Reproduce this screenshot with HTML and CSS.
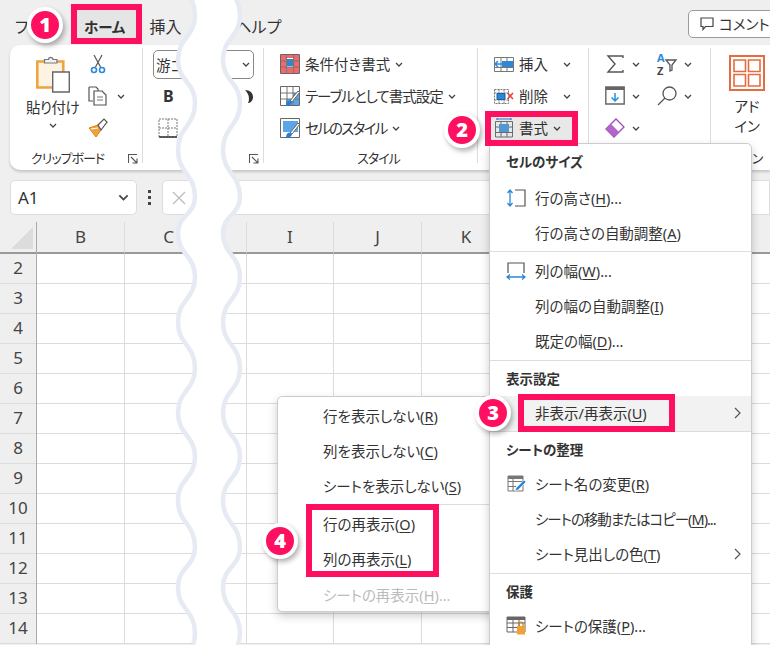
FILE: index.html
```html
<!DOCTYPE html>
<html lang="ja">
<head>
  <meta charset="UTF-8" />
  <title>書式 - 行と列の再表示</title>
  <link rel="stylesheet" href="styles.css">
</head>
<body>
  <svg class="defs" width="0" height="0">
    <symbol id="chev" viewBox="0 0 8 5"><path d="M1 1l3 3 3-3" fill="none" stroke="#444" stroke-width="1.3"/></symbol>
    <symbol id="launch" viewBox="0 0 10 10"><path d="M.5 9V.5H9M3 3l5.500 5.500M9 4.500V9H4.500" fill="none" stroke="#555" stroke-width="1.100"/></symbol>
    <symbol id="brush" viewBox="0 0 20 20"><path d="M10 15L18 5l1.500 1.500L12 16z" fill="#fff" stroke="#666" stroke-width="1"/><path d="M6 20c0-3 1-5 3-5.500l3 1.500c-.5 3-3 4-6 4z" fill="#2b7cd3"/></symbol>
  </svg>

  <!-- Tabs -->
  <nav class="tabs">
    <span class="tab tab-file">ファイル</span>
    <span class="tab tab-home">ホーム</span>
    <span class="tab tab-insert">挿入</span>
    <span class="tab tab-help">ヘルプ</span>
    <span class="comment-btn">
      <svg class="icon-14" viewBox="0 0 14 14"><path d="M1 1h12v8.500H5.500L3 12.500v-3H1z" fill="#fff" stroke="#444" stroke-width="1.200"/></svg>
      コメント
    </span>
  </nav>

  <!-- Ribbon -->
  <div class="ribbon">
    <section class="group group-clip">
      <div class="group-body">
        <div class="paste">
          <svg class="icon-paste" viewBox="0 0 34 38">
            <path d="M1.300 6.500h26v26H1.300z" fill="#fdf3e3" stroke="#eea33c" stroke-width="2.500"/>
            <path d="M8.500 8V4.500h4a2.200 2.200 0 0 1 4.400 0h4V8z" fill="#f2f2f2" stroke="#777" stroke-width="1.200"/>
            <path d="M16.700 17h16.600v20H16.700z" fill="#fff" stroke="#666" stroke-width="1.400"/>
          </svg>
          <span class="paste-label">貼り付け</span>
          <svg class="chev"><use href="#chev"/></svg>
        </div>
        <div class="clip-tools">
          <div class="clip-row">
            <svg class="icon-20" viewBox="0 0 20 20">
              <path d="M6 1l6.500 12M14 1L7.500 13" fill="none" stroke="#555" stroke-width="1.200"/>
              <circle cx="6" cy="16" r="2.500" fill="none" stroke="#2b88d8" stroke-width="1.600"/>
              <circle cx="14" cy="16" r="2.500" fill="none" stroke="#2b88d8" stroke-width="1.600"/>
            </svg>
          </div>
          <div class="clip-row">
            <svg class="icon-20" viewBox="0 0 20 20">
              <path d="M1 1h7l2 2v2M1 1v14h4" fill="none" stroke="#555" stroke-width="1.200"/>
              <path d="M6 5h8l4 4v10H6z" fill="#fff" stroke="#555" stroke-width="1.200"/>
              <path d="M9 11h6M9 14h6" stroke="#777"/>
            </svg>
            <svg class="chev chev-copy"><use href="#chev"/></svg>
          </div>
          <div class="clip-row">
            <svg class="icon-20" viewBox="0 0 20 20">
              <path d="M1 10l9-3 3 5-5 7z" fill="#f0a13a" stroke="#e0851c"/>
              <path d="M3 11l7-1" stroke="#fff"/>
              <path d="M10 7l6-6 3 3-6 8z" fill="#fff" stroke="#555" stroke-width="1.200"/>
            </svg>
          </div>
        </div>
      </div>
      <div class="group-label label-clip">
        <span class="tight">クリップボード</span>
        <svg class="launcher"><use href="#launch"/></svg>
      </div>
    </section>

    <section class="group group-font">
      <div class="group-body group-stack">
        <div class="font-box">
          <span class="font-name">游ゴシック</span>
          <svg class="chev"><use href="#chev"/></svg>
        </div>
        <div class="font-row">
          <b class="bold-mark">B</b>
          <svg class="icon-crescent" viewBox="0 0 8 13"><path d="M0 0c5 0 8 3 8 7s-3 6-5 6c2-4 1-9-3-13z" fill="#333"/></svg>
        </div>
        <svg class="icon-border" viewBox="0 0 20 20">
          <path d="M1 1h18v18H1zM10 1v18M1 10h18" fill="none" stroke="#777" stroke-dasharray="2 1"/>
          <path d="M1 19h18" stroke="#333" stroke-width="1.500"/>
        </svg>
      </div>
      <div class="group-label label-font">
        <svg class="launcher"><use href="#launch"/></svg>
      </div>
    </section>

    <section class="group group-styles">
      <div class="group-body group-stack">
        <div class="tool">
          <svg class="icon-20" viewBox="0 0 20 20">
            <path d="M.5.5h19v19H.5z" fill="#fff" stroke="#666"/>
            <path d="M1 1h5v18H1zM14 1h5v18h-5zM6 13h8v6H6zM6 1h8v3H6z" fill="#f0686a"/>
            <path d="M7 5h6v7H7z" fill="#2b88d8"/>
            <path d="M1 7h18M1 13h18M6.500 1v18M13.500 1v18" stroke="#777" fill="none"/>
          </svg>
          <span>条件付き書式</span>
          <svg class="chev"><use href="#chev"/></svg>
        </div>
        <div class="tool">
          <svg class="icon-20" viewBox="0 0 20 20">
            <path d="M.5.5h19v19H.5z" fill="#fff" stroke="#666"/>
            <path d="M13 7h6v12H6v-6h7z" fill="#5ba6e8"/>
            <path d="M1 7h18M1 13h18M7 1v18M13 1v18" stroke="#777" fill="none"/>
            <use href="#brush" width="20" height="20"/>
          </svg>
          <span class="tight">テーブルとして書式設定</span>
          <svg class="chev"><use href="#chev"/></svg>
        </div>
        <div class="tool">
          <svg class="icon-20" viewBox="0 0 20 20">
            <path d="M.5.5h19v19H.5z" fill="#fff" stroke="#666"/>
            <path d="M3 3h15v11H3z" fill="#5ba6e8"/>
            <use href="#brush" width="20" height="20"/>
          </svg>
          <span class="tighter">セルのスタイル</span>
          <svg class="chev"><use href="#chev"/></svg>
        </div>
      </div>
      <div class="group-label label-center"><span class="tight">スタイル</span></div>
    </section>

    <section class="group group-cells">
      <div class="group-body group-stack">
        <div class="tool">
          <svg class="icon-20" viewBox="0 0 20 20">
            <path d="M.5 3.500h19v14H.5zM7 3.500v14M13 3.500v14M.5 13.500h19" fill="#fff" stroke="#777"/>
            <path d="M8 7h11v6H8z" fill="#2b88d8"/>
            <path d="M8 10H1M4 7l-3 3 3 3" fill="none" stroke="#2b88d8" stroke-width="1.500"/>
          </svg>
          <span>挿入</span>
          <svg class="chev chev-wide"><use href="#chev"/></svg>
        </div>
        <div class="tool">
          <svg class="icon-20" viewBox="0 0 20 20">
            <path d="M.5 3.500h14v14H.5zM5 3.500v14M10 3.500v14M.5 7h14M.5 14h14" fill="#fff" stroke="#777" stroke-dasharray="2 1"/>
            <path d="M3 7.500h8v6H3z" fill="#2b88d8" stroke="#1a5fa0"/>
            <path d="M13.500 7l5.500 6M19 7l-5.500 6" stroke="#e8403c" stroke-width="1.500"/>
          </svg>
          <span>削除</span>
          <svg class="chev chev-wide"><use href="#chev"/></svg>
        </div>
        <div class="tool tool-format">
          <svg class="icon-20" viewBox="0 0 20 20">
            <path d="M1.500 3.500h17v15.500h-17zM1.500 9h17M1.500 14.500h17M7 3.500V19M13 3.500V19" fill="#fff" stroke="#777"/>
            <path d="M5 6h10v8H5z" fill="#5ba6e8"/>
            <path d="M3 1h14M3 0v2M17 0v2" stroke="#2b88d8" stroke-width="1.200"/>
          </svg>
          <span>書式</span>
          <svg class="chev"><use href="#chev"/></svg>
        </div>
      </div>
    </section>

    <section class="group group-edit">
      <div class="edit-grid">
        <div class="tool">
          <svg class="icon-20" viewBox="0 0 20 20"><path d="M18 4V2H3l7 8-7 8h15v-2" fill="none" stroke="#555" stroke-width="1.400"/></svg>
          <svg class="chev"><use href="#chev"/></svg>
        </div>
        <div class="tool">
          <svg class="icon-20 icon-sort" viewBox="0 0 20 20">
            <text class="icon-az icon-a" x="0" y="8">A</text>
            <text class="icon-az" x="0" y="21">Z</text>
            <path d="M9 6h10l-4 5v5l-2 1v-6z" fill="#fff" stroke="#555" stroke-width="1.300"/>
          </svg>
          <svg class="chev"><use href="#chev"/></svg>
        </div>
        <div class="tool">
          <svg class="icon-20" viewBox="0 0 20 20">
            <path d="M.8 1h18.400v17H.8z" fill="#fff" stroke="#666" stroke-width="1.400"/>
            <path d="M1 1h18v3H1z" fill="#666"/>
            <path d="M10 7v8M6.500 11.500L10 15l3.500-3.500" fill="none" stroke="#1e90e0" stroke-width="1.500"/>
          </svg>
          <svg class="chev"><use href="#chev"/></svg>
        </div>
        <div class="tool">
          <svg class="icon-20" viewBox="0 0 20 20">
            <circle cx="12.500" cy="7.500" r="6.500" fill="#fff" stroke="#555" stroke-width="1.300"/>
            <path d="M8 12L1 19" stroke="#555" stroke-width="1.300"/>
          </svg>
          <svg class="chev"><use href="#chev"/></svg>
        </div>
        <div class="tool">
          <svg class="icon-20" viewBox="0 0 20 20">
            <path d="M1 11L11 1l8 8-10 10z" fill="#fff" stroke="#a347ba" stroke-width="1.300"/>
            <path d="M1 11l5-5 8 8-5 5z" fill="#b565c9"/>
          </svg>
          <svg class="chev"><use href="#chev"/></svg>
        </div>
      </div>
    </section>

    <section class="group group-addin">
      <div class="addin">
        <svg class="icon-addin" viewBox="0 0 36 36">
          <path d="M1 1h34v34H1z" fill="#fff" stroke="#e56b40" stroke-width="2"/>
          <path d="M5 5h11.500v11.500H5zM19.500 5H31v11.500H19.500zM5 19.500h11.500V31H5zM19.500 19.500H31V31H19.500z" fill="#fff" stroke="#e56b40" stroke-width="1.600"/>
        </svg>
        <span>アド<br>イン</span>
      </div>
      <div class="group-label label-center"><span>アドイン</span></div>
    </section>
  </div>

  <!-- Formula bar -->
  <div class="formula-bar">
    <div class="name-box">
      <span>A1</span>
      <svg class="chev-name"><use href="#chev"/></svg>
    </div>
    <div class="dots"><i></i><i></i><i></i></div>
    <div class="formula-box">
      <svg class="icon-x" viewBox="0 0 14 14"><path d="M1 1l12 12M13 1L1 13" stroke="#bbb" stroke-width="1.200"/></svg>
    </div>
  </div>

  <!-- Sheet -->
  <div class="sheet">
    <div class="row-heads">
      <div class="corner"><i class="corner-mark"></i></div>
      <div class="row-num">2</div><div class="row-num">3</div><div class="row-num">4</div>
      <div class="row-num">5</div><div class="row-num">6</div><div class="row-num">7</div>
      <div class="row-num">8</div><div class="row-num">9</div><div class="row-num">10</div>
      <div class="row-num">11</div><div class="row-num">12</div><div class="row-num">13</div>
      <div class="row-num">14</div>
    </div>
    <div class="col"><div class="col-head">B</div><div class="col-cells"></div></div>
    <div class="col"><div class="col-head">C</div><div class="col-cells"></div></div>
    <div class="col col-gap"><div class="col-head"></div><div class="col-cells"></div></div>
    <div class="col col-i"><div class="col-head">I</div><div class="col-cells"></div></div>
    <div class="col"><div class="col-head">J</div><div class="col-cells"></div></div>
    <div class="col col-k"><div class="col-head">K</div><div class="col-cells"></div></div>
    <div class="col"><div class="col-head"></div><div class="col-cells"></div></div>
    <div class="col"><div class="col-head"></div><div class="col-cells"></div></div>
    <div class="col"><div class="col-head"></div><div class="col-cells"></div></div>
  </div>

  <!-- Torn edge between columns -->
  <svg class="wave" viewBox="0 0 770 645">
    <path d="M178 -30C178 -7.500 195 -7.500 195 15C195 37.500 178 37.500 178 60C178 81.500 195 81.500 195 103C195 126.500 178 126.500 178 150C178 173.500 195 173.500 195 197C195 215 178 215 178 233C178 255 195 255 195 277C195 299.500 178 299.500 178 322C178 345 195 345 195 368C195 390.500 178 390.500 178 413C178 435 195 435 195 457C195 478.500 178 478.500 178 500C178 523.500 195 523.500 195 547C195 567 178 567 178 587C178 610 195 610 195 633C195 656 178 656 178 680L223 680C223 656 240 656 240 633C240 610 223 610 223 587C223 567 240 567 240 547C240 523.500 223 523.500 223 500C223 478.500 240 478.500 240 457C240 435 223 435 223 413C223 390.500 240 390.500 240 368C240 345 223 345 223 322C223 299.500 240 299.500 240 277C240 255 223 255 223 233C223 215 240 215 240 197C240 173.500 223 173.500 223 150C223 126.500 240 126.500 240 103C240 81.500 223 81.500 223 60C223 37.500 240 37.500 240 15C240 -7.500 223 -7.500 223 -30Z" fill="#fff" stroke="#e6eaf2" stroke-width="4.500"/>
  </svg>

  <!-- Submenu -->
  <div class="menu submenu">
    <div class="menu-item">行を表示しない(<u>R</u>)</div>
    <div class="menu-item">列を表示しない(<u>C</u>)</div>
    <div class="menu-item">シートを表示しない(<u>S</u>)</div>
    <div class="menu-sep"></div>
    <div class="menu-item">行の再表示(<u>O</u>)</div>
    <div class="menu-item">列の再表示(<u>L</u>)</div>
    <div class="menu-item is-disabled">シートの再表示(<u>H</u>)...</div>
  </div>

  <!-- Format menu -->
  <div class="menu format-menu">
    <div class="menu-title title-first">セルのサイズ</div>
    <div class="menu-item">
      <svg class="menu-icon" viewBox="0 0 20 20">
        <path d="M9 2h10v16H9" fill="none" stroke="#555" stroke-width="1.200"/>
        <path d="M4 2v16M1.500 5L4 2l2.500 3M1.500 15L4 18l2.500-3" fill="none" stroke="#2b88d8" stroke-width="1.300"/>
      </svg>
      行の高さ(<u>H</u>)...
    </div>
    <div class="menu-item">行の高さの自動調整(<u>A</u>)</div>
    <div class="menu-sep sep-after"></div>
    <div class="menu-item">
      <svg class="menu-icon" viewBox="0 0 20 20">
        <path d="M2 12V2h16v10" fill="none" stroke="#555" stroke-width="1.200"/>
        <path d="M1 16h18M4 13.500L1 16l3 2.500M16 13.500l3 2.500-3 2.500" fill="none" stroke="#2b88d8" stroke-width="1.300"/>
      </svg>
      列の幅(<u>W</u>)...
    </div>
    <div class="menu-item">列の幅の自動調整(<u>I</u>)</div>
    <div class="menu-item">既定の幅(<u>D</u>)...</div>
    <div class="menu-sep sep-before"></div>
    <div class="menu-title">表示設定</div>
    <div class="menu-item is-hover">
      非表示/再表示(<u>U</u>)
      <svg class="menu-arrow" viewBox="0 0 7 12"><path d="M1 1l5 5-5 5" fill="none" stroke="#555" stroke-width="1.200"/></svg>
    </div>
    <div class="menu-sep"></div>
    <div class="menu-title">シートの整理</div>
    <div class="menu-item">
      <svg class="menu-icon" viewBox="0 0 20 20">
        <path d="M2 2h15v3H2z" fill="#777"/>
        <path d="M2 2h15v15H2zM2 7.500h15M2 12.500h8M7 5v12" fill="none" stroke="#777"/>
        <path d="M9 17l1-3 8-8 2 2-8 8z" fill="#2b88d8" stroke="#fff" stroke-width=".6"/>
      </svg>
      シート名の変更(<u>R</u>)
    </div>
    <div class="menu-item"><span class="tight">シートの移動またはコピー(<u>M</u>)...</span></div>
    <div class="menu-item">
      シート見出しの色(<u>T</u>)
      <svg class="menu-arrow" viewBox="0 0 7 12"><path d="M1 1l5 5-5 5" fill="none" stroke="#555" stroke-width="1.200"/></svg>
    </div>
    <div class="menu-sep sep-before"></div>
    <div class="menu-title">保護</div>
    <div class="menu-item">
      <svg class="menu-icon" viewBox="0 0 20 20">
        <path d="M1 1h18v3H1z" fill="#666"/>
        <path d="M1 1h18v15H1zM1 7h18M1 11.500h18M7 1v15M13 1v15" fill="none" stroke="#666"/>
        <path d="M11 10h8v8.500h-8z" fill="#f0a13a"/>
        <path d="M13 10V8a2 2 0 0 1 4 0v2" fill="none" stroke="#c57a14" stroke-width="1.200"/>
      </svg>
      シートの保護(<u>P</u>)...
    </div>
  </div>

  <!-- Annotations -->
  <div class="mark mark-home"></div>
  <div class="mark mark-format"></div>
  <div class="mark mark-hide"></div>
  <div class="mark mark-show"></div>
  <div class="badge badge-1">1</div>
  <div class="badge badge-2">2</div>
  <div class="badge badge-3">3</div>
  <div class="badge badge-4">4</div>
</body>
</html>
```

FILE: styles.css
```css
/* Reset */
*, *::before, *::after {
  box-sizing: border-box;
}
html, body {
  height: 100%;
}
body {
  position: relative;
  width: 770px;
  height: 645px;
  margin: 0;
  overflow: hidden;
  background: #efefef;
  color: #333;
  font-family: "Noto Sans", "Noto Sans CJK JP", sans-serif;
  font-feature-settings: "palt";
  font-size: 14.5px;
  line-height: 20px;
}
svg {
  display: block;
  flex: none;
}
.defs {
  position: absolute;
}
.tight {
  letter-spacing: -1px;
}
.tighter {
  letter-spacing: -1.700px;
}

/* Tabs */
.tabs {
  display: flex;
  align-items: center;
  height: 45px;
  padding: 9px 0 0 15px;
  font-size: 16px;
}
.tab {
  white-space: nowrap;
}
.tab-file {
  width: 45px;
  overflow: hidden;
}
.tab-home {
  margin-left: 24px;
  font-weight: 700;
  font-size: 14.5px;
}
.tab-insert {
  margin-left: 24px;
}
.tab-help {
  margin-left: 54px;
}
.comment-btn {
  display: flex;
  align-items: center;
  gap: 5px;
  width: 100px;
  height: 28px;
  margin: -7px 0 0 auto;
  margin-right: -18px;
  padding-left: 11px;
  background: #fff;
  border: 1px solid #999;
  border-radius: 5px;
  font-size: 14.5px;
  white-space: nowrap;
}
.icon-14 {
  width: 14px;
  height: 14px;
}

/* Ribbon */
.ribbon {
  display: flex;
  height: 125px;
  margin-left: 10px;
  padding-top: 3px;
  background: #fff;
  border-radius: 10px 0 0 10px;
  box-shadow: 0 2px 3px rgba(0, 0, 0, 0.18);
}
.group {
  height: 115px;
  border-right: 1px solid #dcdcdc;
}
.group-body {
  display: flex;
  height: 96px;
}
.group-stack {
  flex-direction: column;
}
.group-label {
  display: flex;
  height: 19px;
  padding-top: 4px;
  font-size: 13px;
  white-space: nowrap;
}
.label-center {
  justify-content: center;
}
.launcher {
  width: 10px;
  height: 10px;
  margin-top: 6px;
}
.chev {
  width: 8px;
  height: 5px;
}
.icon-20 {
  width: 20px;
  height: 20px;
}

.group-clip {
  width: 133px;
  padding-left: 17px;
}
.paste {
  display: flex;
  flex-direction: column;
  align-items: center;
  width: 51px;
  padding-top: 7px;
}
.icon-paste {
  width: 34px;
  height: 38px;
}
.paste-label {
  margin-top: 4px;
  letter-spacing: -0.500px;
  white-space: nowrap;
}
.paste .chev {
  margin-top: 6px;
}
.clip-tools {
  margin-left: 10px;
}
.clip-row {
  display: flex;
  align-items: center;
  height: 32px;
}
.chev-copy {
  margin-left: 9px;
}
.label-clip {
  justify-content: space-between;
  width: 107px;
  margin-left: 4px;
}

.group-font {
  width: 121px;
  padding-left: 10px;
}
.font-box {
  display: flex;
  align-items: center;
  justify-content: space-between;
  width: 101px;
  height: 29px;
  margin-top: 2px;
  padding: 0 3px 0 2px;
  border: 1px solid #888;
  border-radius: 5px;
  font-size: 14.5px;
  white-space: nowrap;
}
.font-row {
  display: flex;
  align-items: center;
  justify-content: space-between;
  height: 28px;
  margin-top: 3px;
  padding: 0 10px 0 10px;
}
.bold-mark {
  font-size: 16px;
}
.icon-crescent {
  width: 8px;
  height: 13px;
}
.icon-border {
  width: 20px;
  height: 20px;
  margin: 8px 0 0 5px;
}
.label-font {
  justify-content: flex-end;
  padding-right: 4px;
}

.group-styles {
  width: 214px;
  padding-left: 16px;
}
.tool {
  display: flex;
  align-items: center;
  height: 32px;
  white-space: nowrap;
}
.tool > span {
  margin-left: 5px;
}
.tool .chev {
  margin-left: 5px;
}
.group-cells {
  width: 111px;
  padding-left: 16px;
}
.tool .chev-wide {
  margin-left: 15px;
}
.group-edit {
  width: 122px;
  padding-left: 16px;
}
.edit-grid {
  display: grid;
  grid-template-columns: 52px auto;
  grid-auto-rows: 32px;
}
.edit-grid .chev {
  margin-left: 7px;
}
.icon-sort {
  overflow: visible;
}
.icon-az {
  font-size: 11px;
  font-weight: 700;
  fill: #444;
}
.icon-a {
  fill: #2b88d8;
}
.group-addin {
  flex: 1;
  border-right: none;
  white-space: nowrap;
}
.addin {
  display: flex;
  flex-direction: column;
  align-items: center;
  width: 36px;
  height: 96px;
  margin-left: 18px;
  padding-top: 7px;
  text-align: center;
}
.icon-addin {
  width: 36px;
  height: 36px;
  margin-bottom: 5px;
}

/* Formula bar */
.formula-bar {
  display: flex;
  align-items: center;
  height: 35px;
  margin: 10px 0 0 10px;
}
.name-box {
  display: flex;
  align-items: center;
  justify-content: space-between;
  width: 127px;
  height: 35px;
  padding: 0 7px;
  background: #fff;
  border: 1px solid #ddd;
  border-radius: 5px;
  font-size: 17px;
}
.chev-name {
  width: 11px;
  height: 7px;
}
.dots {
  display: flex;
  flex-direction: column;
  align-items: center;
  gap: 3px;
  width: 25px;
}
.dots i {
  width: 3px;
  height: 3px;
  background: #444;
}
.formula-box {
  display: flex;
  align-items: center;
  flex: 1;
  height: 35px;
  padding-left: 9px;
  background: #fff;
  border: 1px solid #ddd;
  border-radius: 5px 0 0 5px;
}
.icon-x {
  width: 14px;
  height: 14px;
}

/* Sheet */
.sheet {
  display: flex;
  margin-top: 7px;
  font-size: 17px;
  color: #444;
}
.row-heads {
  width: 37px;
  flex: none;
  border-right: 1px solid #aaa;
}
.corner {
  position: relative;
  height: 32px;
  border-bottom: 2px solid #999;
}
.corner-mark {
  position: absolute;
  right: 3px;
  bottom: 3px;
  width: 22px;
  height: 22px;
  background: #dcdcdc;
  clip-path: polygon(100% 0, 100% 100%, 0 100%);
}
.row-num {
  display: flex;
  align-items: center;
  justify-content: center;
  height: 30px;
  padding-bottom: 1px;
  border-bottom: 1px solid #dcdcdc;
}
.col {
  width: 88px;
  flex: none;
}
.col-gap {
  width: 34px;
}
.col-i {
  width: 87px;
}
.col-k {
  width: 89px;
}
.col-head {
  display: flex;
  align-items: center;
  justify-content: center;
  height: 32px;
  border-right: 1px solid #dcdcdc;
  border-bottom: 2px solid #999;
}
.col-cells {
  height: 390px;
  background: #fff;
  border-right: 1px solid #dcdcdc;
  background-image: linear-gradient(transparent 29px, #dcdcdc 29px);
  background-size: 100% 30px;
}

/* Torn edge */
.wave {
  position: absolute;
  top: 0;
  left: 0;
  width: 770px;
  height: 645px;
}

/* Menus */
.menu {
  position: absolute;
  background: #fff;
  border: 1px solid #ccc;
  border-radius: 5px;
  box-shadow: 0 4px 10px rgba(0, 0, 0, 0.2);
  white-space: nowrap;
}
.format-menu {
  top: 143px;
  left: 489px;
  width: 263px;
  height: 520px;
}
.submenu {
  top: 396px;
  left: 277px;
  width: 220px;
  height: 216px;
  padding-top: 2px;
}
.menu-title {
  display: flex;
  align-items: center;
  height: 35px;
  padding-left: 16px;
  font-weight: 700;
  font-size: 13.5px;
}
.title-first {
  margin-bottom: 2px;
}
.menu-item {
  position: relative;
  display: flex;
  align-items: center;
  height: 35px;
  padding-bottom: 2px;
  padding-left: 45px;
}
.menu-item u {
  text-underline-offset: 2px;
}
.menu-icon {
  position: absolute;
  left: 16px;
  top: 7px;
  width: 20px;
  height: 20px;
}
.menu-arrow {
  position: absolute;
  left: 244px;
  top: 11px;
  width: 7px;
  height: 12px;
}
.menu-sep {
  height: 1px;
  margin-left: 30px;
  background: #ddd;
}
.format-menu .menu-sep {
  margin-left: 0;
}
.sep-after {
  margin-bottom: 2px;
}
.sep-before {
  margin-top: 1px;
}
.submenu .menu-sep {
  margin: 0 0 2px 30px;
}
.submenu .is-disabled {
  margin-top: 1px;
  color: #bbb;
}
.is-hover {
  background: #f2f2f2;
}

/* Annotations */
.mark {
  position: absolute;
  border: 6px solid #ff0f5f;
}
.mark-home {
  top: 4px;
  left: 71px;
  width: 71px;
  height: 40px;
  background: rgba(0, 0, 0, 0.04);
}
.mark-format {
  top: 111px;
  left: 485px;
  width: 93px;
  height: 35px;
  background: rgba(0, 0, 0, 0.09);
}
.mark-hide {
  top: 394px;
  left: 518px;
  width: 157px;
  height: 38px;
}
.mark-show {
  top: 504px;
  left: 306px;
  width: 133px;
  height: 73px;
}
.badge {
  position: absolute;
  display: flex;
  align-items: center;
  justify-content: center;
  width: 36px;
  height: 36px;
  background: #ff0f5f;
  border: 4px solid #fff;
  border-radius: 50%;
  box-shadow: 2px 3px 5px rgba(0, 0, 0, 0.3);
  color: #fff;
  font-family: "Open Sans", sans-serif;
  font-size: 20px;
  font-weight: 800;
}
.badge-1 {
  top: 7px;
  left: 27px;
}
.badge-2 {
  top: 112px;
  left: 444px;
}
.badge-3 {
  top: 395px;
  left: 475px;
}
.badge-4 {
  top: 523px;
  left: 262px;
}
```
